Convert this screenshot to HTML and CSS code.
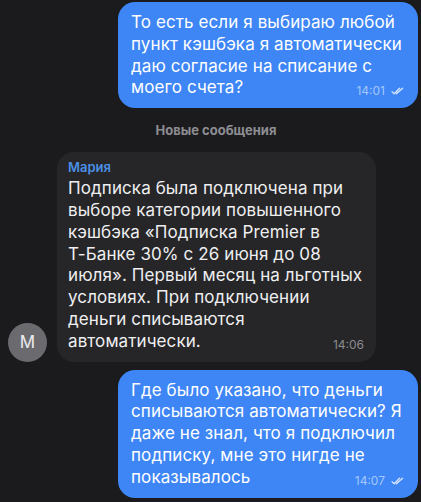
FILE: index.html
```html
<!DOCTYPE html>
<html lang="ru">
<head>
    <meta charset="UTF-8">
    <meta name="viewport" content="width=device-width, initial-scale=1.0">
    <title>Чат</title>
    <link rel="stylesheet" href="styles.css">
</head>
<body>
    <div class="chat">
        <!-- Исходящее -->
        <div class="row out">
            <div class="bubble blue">
                <p class="text">То есть если я выбираю любой<br>пункт кэшбэка я автоматически<br>даю согласие на списание с<br>моего счета?<span class="spacer"></span></p>
                <span class="meta">14:01
                    <svg class="ticks" width="13" height="8" viewBox="0 0 13 8"><path d="M1 4.6 L3.2 6.8 L8.6 1.2 M5.4 6.8 L11.6 1.2" fill="none" stroke="currentColor" stroke-width="1.3" stroke-linecap="round" stroke-linejoin="round"/></svg>
                </span>
            </div>
        </div>

        <div class="divider">Новые сообщения</div>

        <!-- Входящее -->
        <div class="row in">
            <div class="avatar">M</div>
            <div class="bubble gray">
                <div class="name">Мария</div>
                <p class="text">Подписка была подключена при<br>выборе категории повышенного<br>кэшбэка «Подписка Premier в<br>Т-Банке 30% с 26 июня до 08<br>июля». Первый месяц на льготных<br>условиях. При подключении<br>деньги списываются<br>автоматически.<span class="spacer"></span></p>
                <span class="meta">14:06</span>
            </div>
        </div>

        <div class="row out">
            <div class="bubble blue">
                <p class="text">Где было указано, что деньги<br>списываются автоматически? Я<br>даже не знал, что я подключил<br>подписку, мне это нигде не<br>показывалось<span class="spacer"></span></p>
                <span class="meta">14:07
                    <svg class="ticks" width="13" height="8" viewBox="0 0 13 8"><path d="M1 4.6 L3.2 6.8 L8.6 1.2 M5.4 6.8 L11.6 1.2" fill="none" stroke="currentColor" stroke-width="1.3" stroke-linecap="round" stroke-linejoin="round"/></svg>
                </span>
            </div>
        </div>
    </div>
</body>
</html>
```

FILE: styles.css
```css
* {
    box-sizing: border-box;
    margin: 0;
    padding: 0;
}

body {
    background: #1b1b1d;
    font-family: 'Inter', 'Roboto', sans-serif;
    color: #f2f2f4;
    height: 502px;
    overflow: hidden;
}

.chat {
    display: flex;
    flex-direction: column;
    padding: 2px 3px 0 8px;
}

.row {
    display: flex;
    align-items: flex-end;
}

.row.out {
    justify-content: flex-end;
}

.row.in {
    gap: 10px;
    margin-bottom: 8px;
}

.bubble {
    position: relative;
    border-radius: 17px;
}

.bubble.blue {
    background: #3e86f5;
    width: 300px;
    padding: 10px 12px 9px 13px;
}

.bubble.gray {
    background: #262628;
    width: 319px;
    padding: 7px 12px 9px 11px;
}

.text {
    font-size: 17px;
    line-height: 21.8px;
    white-space: nowrap;
    letter-spacing: 0.1px;
    color: #fff;
}

.gray .text {
    color: #efeff1;
}

/* место под время в последней строке */
.spacer {
    display: inline-block;
    width: 60px;
}

.name {
    font-size: 13px;
    font-weight: 600;
    color: #4b8fe6;
    line-height: 16px;
    margin-bottom: 3px;
}

.meta {
    position: absolute;
    right: 14px;
    bottom: 10px;
    display: flex;
    align-items: center;
    gap: 6px;
    font-size: 12px;
    line-height: 14px;
    color: #a4c6fb;
}

.gray .meta {
    right: 12px;
    color: #8b8b90;
}

.ticks {
    color: #d8e6fd;
}

.divider {
    text-align: center;
    font-size: 13px;
    font-weight: 700;
    color: #8d8d92;
    padding: 14px 0 14px 6px;
    line-height: 16px;
}

.avatar {
    width: 39px;
    height: 39px;
    border-radius: 50%;
    background: #6b6b6f;
    color: #ececee;
    font-size: 17px;
    display: flex;
    align-items: center;
    justify-content: center;
}
```
